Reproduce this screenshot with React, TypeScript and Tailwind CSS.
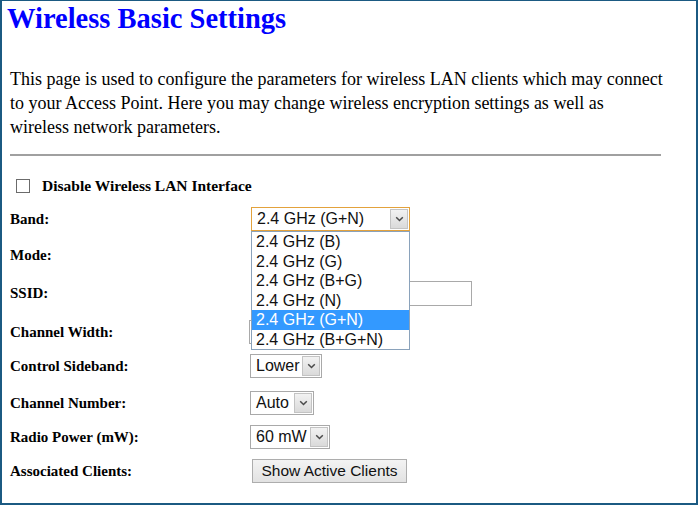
import React from "react";

const Chevron = () => (
  <svg width="9" height="6" viewBox="0 0 9 6" className="block">
    <polyline points="1.2,1.2 4.5,4.5 7.8,1.2" fill="none" stroke="#4a4a4a" strokeWidth="1.5" />
  </svg>
);

function Sel({ w, text, focused }: { w: string; text: string; focused?: boolean }) {
  return (
    <div
      className={
        "h-[24px] flex items-center bg-white border box-border font-['Liberation_Sans',Arial,sans-serif] text-[16px] text-[#111] " +
        w +
        (focused ? " border-[#e3a23c]" : " border-[#a9a9a9]")
      }
    >
      <span className="pl-[5px] flex-1 leading-[20px] whitespace-nowrap">{text}</span>
      <div className="mr-[1px] h-[20px] w-[18px] box-border border border-[#c3c3c3] bg-gradient-to-b from-[#f2f2f2] to-[#dadada] flex items-center justify-center">
        <Chevron />
      </div>
    </div>
  );
}

const opts = ["2.4 GHz (B)", "2.4 GHz (G)", "2.4 GHz (B+G)", "2.4 GHz (N)", "2.4 GHz (G+N)", "2.4 GHz (B+G+N)"];

function Row({ h, label, children }: { h: string; label: string; children?: React.ReactNode }) {
  return (
    <div className={"flex items-center " + h}>
      <div className="w-[248px] pl-[8px] font-bold text-[15px] leading-[18px]">{label}</div>
      <div className="flex items-center">{children}</div>
    </div>
  );
}

export default function App() {
  return (
    <div className="w-[698px] h-[505px] box-border border-t border-l-2 border-r-2 border-b-2 border-[#1b5a82] bg-white overflow-hidden font-['Liberation_Serif','Times_New_Roman',serif] text-black">
      <h1 className="pt-[2px] pl-[5px] text-[28.5px] leading-[32px] font-bold text-[#0000ff] whitespace-nowrap">
        Wireless Basic Settings
      </h1>
      <p className="mt-[32px] pl-[8px] w-[665px] text-[18px] leading-[24px]">
        This page is used to configure the parameters for wireless LAN clients which may connect to your Access Point. Here you may change wireless encryption settings as well as wireless network parameters.
      </p>
      <div className="mt-[15px] ml-[8px] w-[651px] h-[2px] bg-[#a0a0a0]" />
      <div className="h-[46px] pt-[14px] flex items-center pl-[14px]">
        <div className="w-[14px] h-[14px] box-border border border-[#6b6b6b] bg-white" />
        <span className="ml-[12px] font-bold text-[15.5px] leading-[18px]">Disable Wireless LAN Interface</span>
      </div>
      <Row h="h-[34px]" label="Band:">
        <div className="relative ml-[1px]">
          <Sel w="w-[159px]" text="2.4 GHz (G+N)" focused />
          <div className="absolute left-0 top-full w-[159px] box-border border border-[#8aa2bb] bg-white z-10 font-['Liberation_Sans',Arial,sans-serif] text-[16px] text-[#111]">
            {opts.map((o, i) => (
              <div
                key={o}
                className={
                  "h-[19.5px] leading-[19.5px] pl-[4px] whitespace-nowrap " + (i === 4 ? "bg-[#3399ff] text-white" : "")
                }
              >
                {o}
              </div>
            ))}
          </div>
        </div>
      </Row>
      <Row h="h-[38px]" label="Mode:">
        <div className="ml-[2px]">
          <Sel w="w-[150px]" text="" />
        </div>
      </Row>
      <Row h="h-[38px]" label="SSID:">
        <div className="ml-[1px] w-[221px] h-[25px] box-border border border-[#a9a9a9] bg-white" />
      </Row>
      <Row h="h-[40px]" label="Channel Width:">
        <div className="-ml-[1px]">
          <Sel w="w-[100px]" text="" />
        </div>
      </Row>
      <Row h="h-[28px]" label="Control Sideband:">
        <Sel w="w-[72px]" text="Lower" />
      </Row>
      <Row h="h-[45px]" label="Channel Number:">
        <Sel w="w-[64px]" text="Auto" />
      </Row>
      <Row h="h-[24px]" label="Radio Power (mW):">
        <Sel w="w-[80px]" text="60 mW" />
      </Row>
      <Row h="h-[44px]" label="Associated Clients:">
        <button className="ml-[2px] w-[155px] h-[24px] box-border border border-[#adadad] bg-gradient-to-b from-[#f3f3f3] to-[#e2e2e2] font-['Liberation_Sans',Arial,sans-serif] text-[15.5px] leading-[20px] text-[#111]">
          Show Active Clients
        </button>
      </Row>
    </div>
  );
}
